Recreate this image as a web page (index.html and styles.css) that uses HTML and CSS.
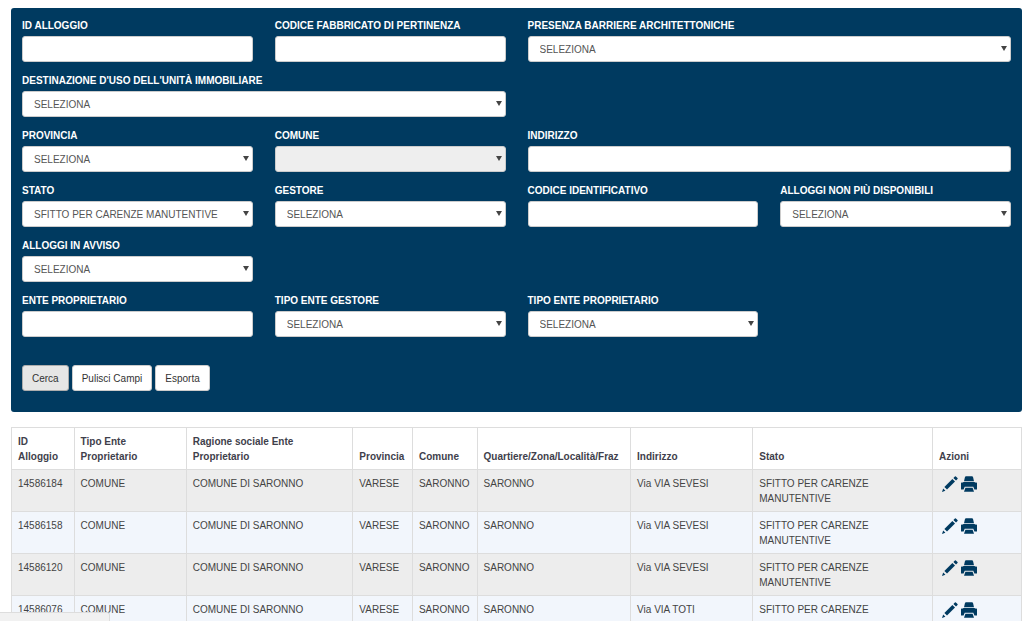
FILE: index.html
```html
<!DOCTYPE html>
<html lang="it">
<head>
<meta charset="utf-8">
<meta name="viewport" content="width=device-width, initial-scale=1">
<title>Ricerca alloggi</title>
<link rel="stylesheet" href="styles.css">
</head>
<body>
<svg class="sprite" aria-hidden="true">
  <symbol id="pencil" viewBox="0 0 16 16">
    <path d="M0 16 L1.2 12.6 L3.4 14.8 Z"/>
    <path d="M2.4 11 L10.4 3 L13 5.6 L5 13.6 Z"/>
    <path d="M11.4 2 L12.9 0.5 Q13.4 0 13.9 0.5 L15.5 2.1 Q16 2.6 15.5 3.1 L14 4.6 Z"/>
  </symbol>
  <symbol id="printer" viewBox="0 0 16 16">
    <path d="M5 0.2 H11 Q11.8 0.2 12 1 L13 5.2 H3 L4 1 Q4.2 0.2 5 0.2 Z"/>
    <path d="M0.6 6.6 H2.2 V6 H13.8 V6.6 H15.4 Q16 6.6 16 7.2 V13.4 H13.4 L12.3 10.8 H3.7 L2.6 13.4 H0 V7.2 Q0 6.6 0.6 6.6 Z"/>
    <path d="M4.4 11.8 H11.6 L13 15.8 H3 Z"/>
  </symbol>
</svg>
<main class="page">
  <form class="search">
    <div class="fields">
      <div class="field">
        <label for="id-alloggio">ID ALLOGGIO</label>
        <input class="control" id="id-alloggio" type="text">
      </div>
      <div class="field">
        <label for="fabbricato">CODICE FABBRICATO DI PERTINENZA</label>
        <input class="control" id="fabbricato" type="text">
      </div>
      <div class="field wide">
        <label for="barriere">PRESENZA BARRIERE ARCHITETTONICHE</label>
        <div class="select"><select class="control" id="barriere"><option>SELEZIONA</option></select></div>
      </div>
      <div class="field wide">
        <label for="destinazione">DESTINAZIONE D'USO DELL'UNITÀ IMMOBILIARE</label>
        <div class="select"><select class="control" id="destinazione"><option>SELEZIONA</option></select></div>
      </div>
      <div class="field first">
        <label for="provincia">PROVINCIA</label>
        <div class="select"><select class="control" id="provincia"><option>SELEZIONA</option></select></div>
      </div>
      <div class="field">
        <label for="comune">COMUNE</label>
        <div class="select"><select class="control" id="comune" disabled><option></option></select></div>
      </div>
      <div class="field wide">
        <label for="indirizzo">INDIRIZZO</label>
        <input class="control" id="indirizzo" type="text">
      </div>
      <div class="field">
        <label for="stato">STATO</label>
        <div class="select"><select class="control" id="stato"><option>SFITTO PER CARENZE MANUTENTIVE</option></select></div>
      </div>
      <div class="field">
        <label for="gestore">GESTORE</label>
        <div class="select"><select class="control" id="gestore"><option>SELEZIONA</option></select></div>
      </div>
      <div class="field">
        <label for="codice">CODICE IDENTIFICATIVO</label>
        <input class="control" id="codice" type="text">
      </div>
      <div class="field">
        <label for="disponibili">ALLOGGI NON PIÙ DISPONIBILI</label>
        <div class="select"><select class="control" id="disponibili"><option>SELEZIONA</option></select></div>
      </div>
      <div class="field">
        <label for="avviso">ALLOGGI IN AVVISO</label>
        <div class="select"><select class="control" id="avviso"><option>SELEZIONA</option></select></div>
      </div>
      <div class="field first">
        <label for="ente">ENTE PROPRIETARIO</label>
        <input class="control" id="ente" type="text">
      </div>
      <div class="field">
        <label for="tipo-gestore">TIPO ENTE GESTORE</label>
        <div class="select"><select class="control" id="tipo-gestore"><option>SELEZIONA</option></select></div>
      </div>
      <div class="field">
        <label for="tipo-proprietario">TIPO ENTE PROPRIETARIO</label>
        <div class="select"><select class="control" id="tipo-proprietario"><option>SELEZIONA</option></select></div>
      </div>
    </div>
    <div class="buttons">
      <button class="button active" type="button">Cerca</button>
      <button class="button" type="reset">Pulisci Campi</button>
      <button class="button" type="button">Esporta</button>
    </div>
  </form>

  <table class="results">
    <colgroup>
      <col class="c-id"><col class="c-tipo"><col class="c-ragione"><col class="c-provincia"><col class="c-comune"><col class="c-quartiere"><col class="c-indirizzo"><col class="c-stato"><col>
    </colgroup>
    <thead>
      <tr>
        <th scope="col">ID Alloggio</th>
        <th scope="col">Tipo Ente<br>Proprietario</th>
        <th scope="col">Ragione sociale Ente<br>Proprietario</th>
        <th scope="col">Provincia</th>
        <th scope="col">Comune</th>
        <th scope="col">Quartiere/Zona/Località/Fraz</th>
        <th scope="col">Indirizzo</th>
        <th scope="col">Stato</th>
        <th scope="col">Azioni</th>
      </tr>
    </thead>
    <tbody>
      <tr>
        <td>14586184</td><td>COMUNE</td><td>COMUNE DI SARONNO</td><td>VARESE</td><td>SARONNO</td><td>SARONNO</td><td>Via VIA SEVESI</td><td>SFITTO PER CARENZE<br>MANUTENTIVE</td>
        <td><div class="actions"><a href="#" aria-label="Modifica"><svg class="icon"><use href="#pencil"/></svg></a><a href="#" aria-label="Stampa"><svg class="icon"><use href="#printer"/></svg></a></div></td>
      </tr>
      <tr>
        <td>14586158</td><td>COMUNE</td><td>COMUNE DI SARONNO</td><td>VARESE</td><td>SARONNO</td><td>SARONNO</td><td>Via VIA SEVESI</td><td>SFITTO PER CARENZE<br>MANUTENTIVE</td>
        <td><div class="actions"><a href="#" aria-label="Modifica"><svg class="icon"><use href="#pencil"/></svg></a><a href="#" aria-label="Stampa"><svg class="icon"><use href="#printer"/></svg></a></div></td>
      </tr>
      <tr>
        <td>14586120</td><td>COMUNE</td><td>COMUNE DI SARONNO</td><td>VARESE</td><td>SARONNO</td><td>SARONNO</td><td>Via VIA SEVESI</td><td>SFITTO PER CARENZE<br>MANUTENTIVE</td>
        <td><div class="actions"><a href="#" aria-label="Modifica"><svg class="icon"><use href="#pencil"/></svg></a><a href="#" aria-label="Stampa"><svg class="icon"><use href="#printer"/></svg></a></div></td>
      </tr>
      <tr>
        <td>14586076</td><td>COMUNE</td><td>COMUNE DI SARONNO</td><td>VARESE</td><td>SARONNO</td><td>SARONNO</td><td>Via VIA TOTI</td><td>SFITTO PER CARENZE</td>
        <td><div class="actions"><a href="#" aria-label="Modifica"><svg class="icon"><use href="#pencil"/></svg></a><a href="#" aria-label="Stampa"><svg class="icon"><use href="#printer"/></svg></a></div></td>
      </tr>
    </tbody>
  </table>
</main>
<div class="status-bar"></div>
</body>
</html>
```
FILE: styles.css
```css
* { box-sizing: border-box; }

body {
  margin: 0;
  background: #fff;
  color: #444;
  font-family: "Liberation Sans", Arial, sans-serif;
  font-size: 10px;
  line-height: 15px;
}

.sprite {
  display: none;
}

.page {
  height: 100vh;
  overflow: hidden;
  padding: 8px 2px 0 11px;
}

.search {
  padding: 10px 11px 21px;
  border-radius: 3px;
  background: #003a60;
}

.fields {
  display: grid;
  grid-template-columns: repeat(4, minmax(0, 1fr));
  gap: 11px 22px;
}

.wide { grid-column: span 2; }
.first { grid-column-start: 1; }

.field label {
  display: block;
  margin-bottom: 3px;
  color: #fff;
  font-weight: bold;
}

.control {
  display: block;
  width: 100%;
  height: 26px;
  padding: 0 11px;
  border: 1px solid #ccc;
  border-radius: 3px;
  background: #fff;
  color: #555;
  font: inherit;
  appearance: none;
}

.control:disabled {
  background: #eee;
  opacity: 1;
}

.select { position: relative; }

.select::after {
  content: "";
  position: absolute;
  top: 10px;
  right: 4px;
  border: solid transparent;
  border-width: 5px 3px 0;
  border-top-color: #444;
  pointer-events: none;
}

.buttons {
  display: flex;
  gap: 3px;
  margin-top: 28px;
}

.button {
  height: 26px;
  padding: 0 9px;
  border: 1px solid #ccc;
  border-radius: 3px;
  background: #fff;
  color: #333;
  font: inherit;
}

.button.active {
  border-color: #adadad;
  background: #e6e6e6;
}

.results {
  width: 100%;
  margin-top: 15px;
  border-collapse: collapse;
  table-layout: fixed;
}

.c-id { width: 6.2%; }
.c-tipo { width: 11.1%; }
.c-ragione { width: 16.5%; }
.c-provincia { width: 5.9%; }
.c-comune { width: 6.4%; }
.c-quartiere { width: 15.2%; }
.c-indirizzo { width: 12.1%; }
.c-stato { width: 17.8%; }

.results th,
.results td {
  padding: 6px 6px 5px;
  border: 1px solid #ddd;
  text-align: left;
  vertical-align: top;
}

.results th {
  color: #3f3f4c;
  vertical-align: bottom;
}

.results tbody tr { background: #f2f6fc; }
.results tbody tr:nth-child(odd) { background: #ededed; }

.actions {
  display: flex;
  gap: 3px;
  padding-left: 3px;
}

.icon {
  display: block;
  width: 16px;
  height: 16px;
  fill: #003a60;
}

.status-bar {
  position: fixed;
  bottom: 0;
  left: 0;
  width: 110px;
  height: 9px;
  border: 1px solid #ddd;
  border-width: 1px 1px 0 0;
  border-radius: 0 3px 0 0;
  background: #f1f1f1;
}
```
